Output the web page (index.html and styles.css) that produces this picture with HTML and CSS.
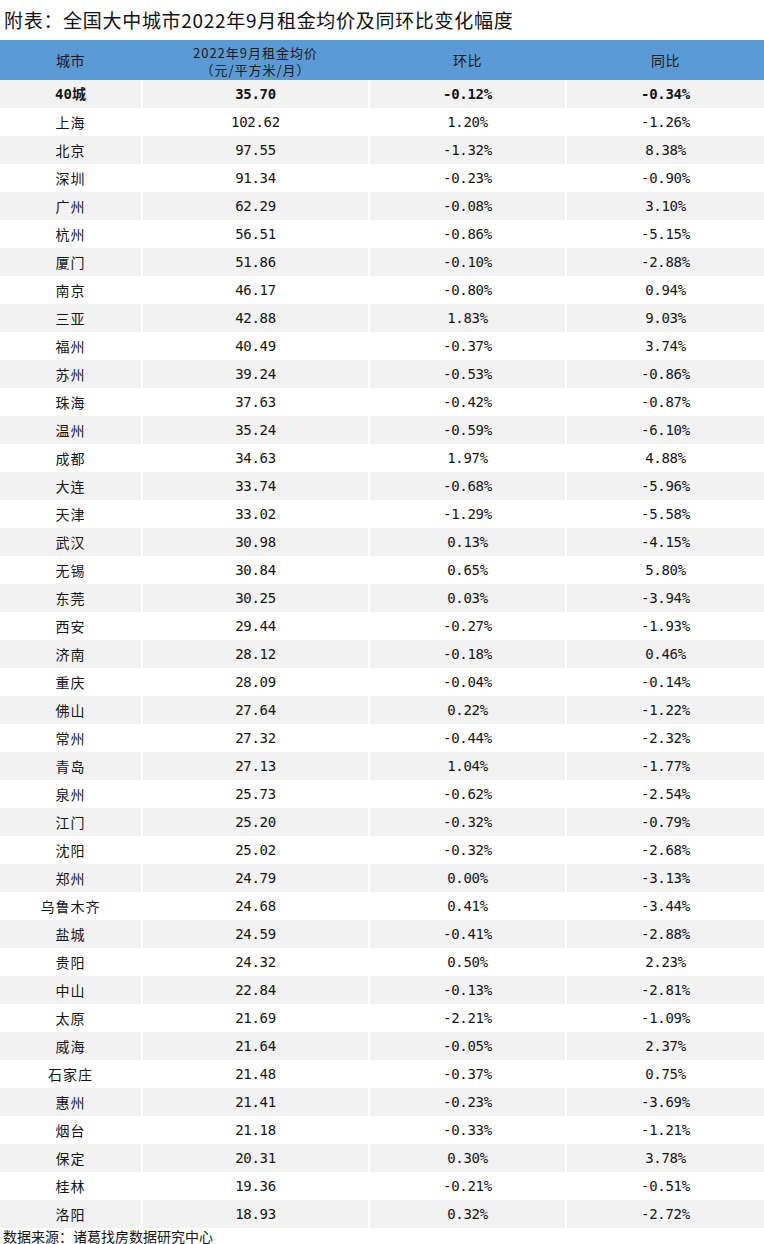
FILE: index.html
```html
<!DOCTYPE html>
<html lang="zh-CN">
<head>
<meta charset="utf-8">
<title>附表</title>
<link rel="stylesheet" href="styles.css">
</head>
<body>
<div class="page">
  <h1 class="title">附表：全国大中城市2022年9月租金均价及同环比变化幅度</h1>
  <div class="table">
    <div class="row head">
      <div class="cell">城市</div>
      <div class="cell two"><span class="line">2022年9月租金均价</span><span class="line">（元/平方米/月）</span></div>
      <div class="cell">环比</div>
      <div class="cell">同比</div>
    </div>
    <div class="row alt total">
      <div class="cell city num">40城</div>
      <div class="cell num">35.70</div>
      <div class="cell num">-0.12%</div>
      <div class="cell num">-0.34%</div>
    </div>
    <div class="row"><div class="cell city">上海</div><div class="cell num">102.62</div><div class="cell num">1.20%</div><div class="cell num">-1.26%</div></div>
    <div class="row alt"><div class="cell city">北京</div><div class="cell num">97.55</div><div class="cell num">-1.32%</div><div class="cell num">8.38%</div></div>
    <div class="row"><div class="cell city">深圳</div><div class="cell num">91.34</div><div class="cell num">-0.23%</div><div class="cell num">-0.90%</div></div>
    <div class="row alt"><div class="cell city">广州</div><div class="cell num">62.29</div><div class="cell num">-0.08%</div><div class="cell num">3.10%</div></div>
    <div class="row"><div class="cell city">杭州</div><div class="cell num">56.51</div><div class="cell num">-0.86%</div><div class="cell num">-5.15%</div></div>
    <div class="row alt"><div class="cell city">厦门</div><div class="cell num">51.86</div><div class="cell num">-0.10%</div><div class="cell num">-2.88%</div></div>
    <div class="row"><div class="cell city">南京</div><div class="cell num">46.17</div><div class="cell num">-0.80%</div><div class="cell num">0.94%</div></div>
    <div class="row alt"><div class="cell city">三亚</div><div class="cell num">42.88</div><div class="cell num">1.83%</div><div class="cell num">9.03%</div></div>
    <div class="row"><div class="cell city">福州</div><div class="cell num">40.49</div><div class="cell num">-0.37%</div><div class="cell num">3.74%</div></div>
    <div class="row alt"><div class="cell city">苏州</div><div class="cell num">39.24</div><div class="cell num">-0.53%</div><div class="cell num">-0.86%</div></div>
    <div class="row"><div class="cell city">珠海</div><div class="cell num">37.63</div><div class="cell num">-0.42%</div><div class="cell num">-0.87%</div></div>
    <div class="row alt"><div class="cell city">温州</div><div class="cell num">35.24</div><div class="cell num">-0.59%</div><div class="cell num">-6.10%</div></div>
    <div class="row"><div class="cell city">成都</div><div class="cell num">34.63</div><div class="cell num">1.97%</div><div class="cell num">4.88%</div></div>
    <div class="row alt"><div class="cell city">大连</div><div class="cell num">33.74</div><div class="cell num">-0.68%</div><div class="cell num">-5.96%</div></div>
    <div class="row"><div class="cell city">天津</div><div class="cell num">33.02</div><div class="cell num">-1.29%</div><div class="cell num">-5.58%</div></div>
    <div class="row alt"><div class="cell city">武汉</div><div class="cell num">30.98</div><div class="cell num">0.13%</div><div class="cell num">-4.15%</div></div>
    <div class="row"><div class="cell city">无锡</div><div class="cell num">30.84</div><div class="cell num">0.65%</div><div class="cell num">5.80%</div></div>
    <div class="row alt"><div class="cell city">东莞</div><div class="cell num">30.25</div><div class="cell num">0.03%</div><div class="cell num">-3.94%</div></div>
    <div class="row"><div class="cell city">西安</div><div class="cell num">29.44</div><div class="cell num">-0.27%</div><div class="cell num">-1.93%</div></div>
    <div class="row alt"><div class="cell city">济南</div><div class="cell num">28.12</div><div class="cell num">-0.18%</div><div class="cell num">0.46%</div></div>
    <div class="row"><div class="cell city">重庆</div><div class="cell num">28.09</div><div class="cell num">-0.04%</div><div class="cell num">-0.14%</div></div>
    <div class="row alt"><div class="cell city">佛山</div><div class="cell num">27.64</div><div class="cell num">0.22%</div><div class="cell num">-1.22%</div></div>
    <div class="row"><div class="cell city">常州</div><div class="cell num">27.32</div><div class="cell num">-0.44%</div><div class="cell num">-2.32%</div></div>
    <div class="row alt"><div class="cell city">青岛</div><div class="cell num">27.13</div><div class="cell num">1.04%</div><div class="cell num">-1.77%</div></div>
    <div class="row"><div class="cell city">泉州</div><div class="cell num">25.73</div><div class="cell num">-0.62%</div><div class="cell num">-2.54%</div></div>
    <div class="row alt"><div class="cell city">江门</div><div class="cell num">25.20</div><div class="cell num">-0.32%</div><div class="cell num">-0.79%</div></div>
    <div class="row"><div class="cell city">沈阳</div><div class="cell num">25.02</div><div class="cell num">-0.32%</div><div class="cell num">-2.68%</div></div>
    <div class="row alt"><div class="cell city">郑州</div><div class="cell num">24.79</div><div class="cell num">0.00%</div><div class="cell num">-3.13%</div></div>
    <div class="row"><div class="cell city">乌鲁木齐</div><div class="cell num">24.68</div><div class="cell num">0.41%</div><div class="cell num">-3.44%</div></div>
    <div class="row alt"><div class="cell city">盐城</div><div class="cell num">24.59</div><div class="cell num">-0.41%</div><div class="cell num">-2.88%</div></div>
    <div class="row"><div class="cell city">贵阳</div><div class="cell num">24.32</div><div class="cell num">0.50%</div><div class="cell num">2.23%</div></div>
    <div class="row alt"><div class="cell city">中山</div><div class="cell num">22.84</div><div class="cell num">-0.13%</div><div class="cell num">-2.81%</div></div>
    <div class="row"><div class="cell city">太原</div><div class="cell num">21.69</div><div class="cell num">-2.21%</div><div class="cell num">-1.09%</div></div>
    <div class="row alt"><div class="cell city">威海</div><div class="cell num">21.64</div><div class="cell num">-0.05%</div><div class="cell num">2.37%</div></div>
    <div class="row"><div class="cell city">石家庄</div><div class="cell num">21.48</div><div class="cell num">-0.37%</div><div class="cell num">0.75%</div></div>
    <div class="row alt"><div class="cell city">惠州</div><div class="cell num">21.41</div><div class="cell num">-0.23%</div><div class="cell num">-3.69%</div></div>
    <div class="row"><div class="cell city">烟台</div><div class="cell num">21.18</div><div class="cell num">-0.33%</div><div class="cell num">-1.21%</div></div>
    <div class="row alt"><div class="cell city">保定</div><div class="cell num">20.31</div><div class="cell num">0.30%</div><div class="cell num">3.78%</div></div>
    <div class="row"><div class="cell city">桂林</div><div class="cell num">19.36</div><div class="cell num">-0.21%</div><div class="cell num">-0.51%</div></div>
    <div class="row alt"><div class="cell city">洛阳</div><div class="cell num">18.93</div><div class="cell num">0.32%</div><div class="cell num">-2.72%</div></div>
  </div>
  <p class="source">数据来源：诸葛找房数据研究中心</p>
</div>
</body>
</html>
```
FILE: styles.css
```css
html, body {
  margin: 0;
  padding: 0;
  background: #ffffff;
}

.page {
  width: 764px;
  color: #151515;
  font-family: "Noto Sans CJK SC", "Noto Sans", sans-serif;
}

.title {
  margin: 0;
  height: 40px;
  padding-left: 4px;
  font-size: 19px;
  font-weight: normal;
  line-height: 40px;
  letter-spacing: 0.7px;
  color: #111111;
  white-space: nowrap;
}

.table {
  display: flex;
  flex-direction: column;
}

.row {
  display: grid;
  grid-template-columns: 141px 225px 195px 197px;
  column-gap: 2px;
  height: 28px;
}

.cell {
  text-align: center;
  line-height: 28px;
  font-size: 14px;
  white-space: nowrap;
}

.row.alt .cell {
  background: #f2f2f2;
}

.row.head {
  height: 40px;
  background: #5b9bd5;
}

.row.head .cell {
  line-height: 40px;
  font-size: 14px;
  letter-spacing: 0.5px;
  color: #1a1a1a;
}

.row.head .cell.two {
  display: flex;
  flex-direction: column;
  justify-content: center;
  align-items: center;
  font-size: 13px;
  letter-spacing: 1px;
  line-height: 17px;
  padding-top: 2px;
}

.line {
  display: block;
}

.city {
  font-family: "Noto Sans CJK SC", sans-serif;
  letter-spacing: 1px;
}

.num {
  font-family: "DejaVu Sans Mono", "Noto Sans CJK SC", monospace;
  letter-spacing: -0.3px;
}

.total .cell {
  font-weight: bold;
}

.total .city {
  letter-spacing: 0;
}

.source {
  margin: 0;
  padding-left: 3px;
  font-size: 14px;
  line-height: 16px;
  color: #151515;
}
```
